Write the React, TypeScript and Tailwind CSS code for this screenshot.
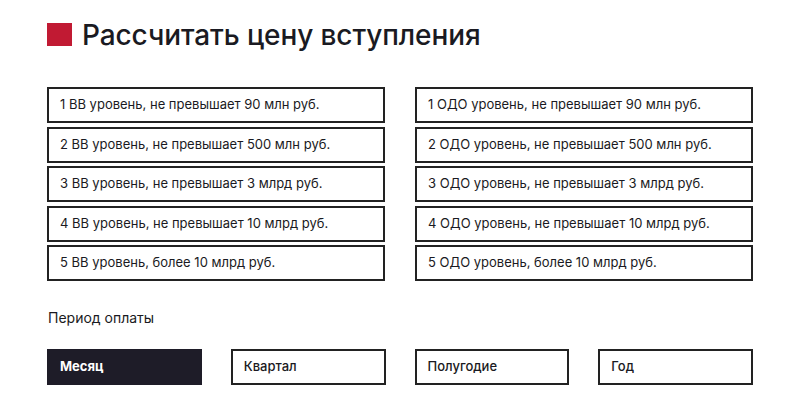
import React from 'react';

const LEFT = [
  "1 ВВ уровень, не превышает 90 млн руб.",
  "2 ВВ уровень, не превышает 500 млн руб.",
  "3 ВВ уровень, не превышает 3 млрд руб.",
  "4 ВВ уровень, не превышает 10 млрд руб.",
  "5 ВВ уровень, более 10 млрд руб.",
];

const RIGHT = [
  "1 ОДО уровень, не превышает 90 млн руб.",
  "2 ОДО уровень, не превышает 500 млн руб.",
  "3 ОДО уровень, не превышает 3 млрд руб.",
  "4 ОДО уровень, не превышает 10 млрд руб.",
  "5 ОДО уровень, более 10 млрд руб.",
];

const PERIODS = ["Месяц", "Квартал", "Полугодие", "Год"];

const App: React.FC = () => {
  return (
    <div className="w-[800px] h-[400px] bg-white overflow-hidden text-[#1a1a22]" style={{ fontFamily: 'Inter, "Noto Sans", sans-serif' }}>
      <div className="pl-[47px] pr-[47px]">
        {/* Title */}
        <div className="flex items-center gap-[10px] pt-[21px] h-[47px]">
          <div className="w-[25px] h-[23px] bg-[#c11a33] shrink-0" />
          <h1 className="text-[28px] font-medium tracking-[-0.1px] leading-none mt-[1px]">Рассчитать цену вступления</h1>
        </div>

        {/* Levels */}
        <div className="grid grid-cols-2 gap-x-[30px] mt-[40px]">
          {[LEFT, RIGHT].map((col, ci) => (
            <div key={ci} className="flex flex-col gap-[3.5px]">
              {col.map((t) => (
                <div key={t} className="h-[36px] border-2 border-[#222] flex items-center pl-[11px] text-[13px]">
                  {t}
                </div>
              ))}
            </div>
          ))}
        </div>

        {/* Period */}
        <div className="mt-[27px] text-[14px] leading-5 pl-[1px]">Период оплаты</div>
        <div className="grid grid-cols-4 gap-x-[29px] mt-[21px] w-[706px]">
          {PERIODS.map((p, i) => (
            <div
              key={p}
              className={
                i === 0
                  ? "h-[36px] border-2 border-[#1e1c28] bg-[#1e1c28] text-white font-bold flex items-center pl-[11px] text-[13px]"
                  : "h-[36px] border-2 border-[#222] flex items-center pl-[11px] text-[13px] font-medium"
              }
            >
              {p}
            </div>
          ))}
        </div>
      </div>
    </div>
  );
};

export default App;
